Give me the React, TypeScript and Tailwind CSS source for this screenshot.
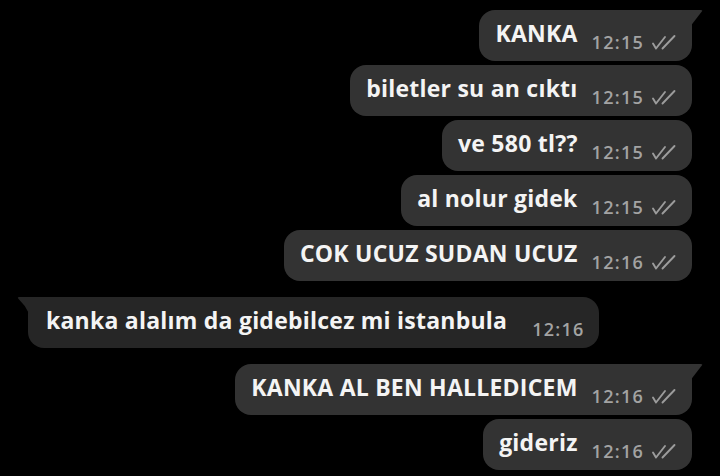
import React from "react";

type Msg = {
  text: string;
  time: string;
  mine: boolean;
  tail?: boolean;
};

const messages: Msg[] = [
  { text: "KANKA", time: "12:15", mine: true, tail: true },
  { text: "biletler su an cıktı", time: "12:15", mine: true },
  { text: "ve 580 tl??", time: "12:15", mine: true },
  { text: "al nolur gidek", time: "12:15", mine: true },
  { text: "COK UCUZ SUDAN UCUZ", time: "12:16", mine: true },
  { text: "kanka alalım da gidebilcez mi istanbula", time: "12:16", mine: false, tail: true },
  { text: "KANKA AL BEN HALLEDICEM", time: "12:16", mine: true, tail: true },
  { text: "gideriz", time: "12:16", mine: true },
];

function DoubleCheck() {
  return (
    <svg
      width="26"
      height="16"
      viewBox="0 0 26 16"
      fill="none"
      stroke="currentColor"
      strokeWidth="1.9"
      strokeLinecap="round"
      strokeLinejoin="round"
      className="ml-[7px] text-[#9c9c9c]"
    >
      <path d="M2 9.5 L5 14.5 L14 3" />
      <path d="M11.5 14.5 L23.5 2" />
    </svg>
  );
}

function Bubble({ m }: { m: Msg }) {
  return (
    <div
      className={`relative flex h-[51px] items-center ${
        m.mine
          ? "bg-[#333333] rounded-2xl pl-[16px] pr-[15px]"
          : "bg-[#262626] rounded-2xl pl-[18px] pr-[14px]"
      } ${m.tail && m.mine ? "rounded-tr-none" : ""} ${
        m.tail && !m.mine ? "rounded-tl-none" : ""
      }`}
    >
      {m.tail && m.mine && (
        <svg
          width="12"
          height="16"
          viewBox="0 0 12 16"
          className="absolute top-0 right-[-11px]"
        >
          <path d="M0 0 H10 Q12 0 10.8 1.6 L0 15.5 Z" fill="#333333" />
        </svg>
      )}
      {m.tail && !m.mine && (
        <svg
          width="12"
          height="17"
          viewBox="0 0 12 17"
          className="absolute top-0 left-[-11px]"
        >
          <path d="M12 0 H2 Q0 0 1.4 1.8 Q8 8 12 16.5 Z" fill="#262626" />
        </svg>
      )}
      <span className="mb-[4px] text-[23px] font-bold tracking-[0.01em] text-[#f4f4f4] whitespace-nowrap">
        {m.text}
      </span>
      <span
        className={`mt-[13px] flex items-center text-[18px] font-semibold text-[#a3a3a3] ${
          m.mine ? "ml-[14px]" : "ml-[25px]"
        }`}
      >
        <span className="tracking-[0.07em]">{m.time}</span>
        {m.mine && <DoubleCheck />}
      </span>
    </div>
  );
}

export default function App() {
  return (
    <div
      className="w-[720px] h-[476px] overflow-hidden bg-black pt-[10px] px-[28px]"
      style={{ fontFamily: "'Open Sans', Roboto, sans-serif" }}
    >
      <div className="flex flex-col">
        {messages.map((m, i) => {
          const prev = messages[i - 1];
          const newGroup = prev && prev.mine !== m.mine;
          return (
            <div
              key={i}
              className={`flex ${m.mine ? "justify-end" : "justify-start"} ${
                i === 0 ? "" : newGroup ? "mt-[16px]" : "mt-[4px]"
              }`}
            >
              <Bubble m={m} />
            </div>
          );
        })}
      </div>
    </div>
  );
}
